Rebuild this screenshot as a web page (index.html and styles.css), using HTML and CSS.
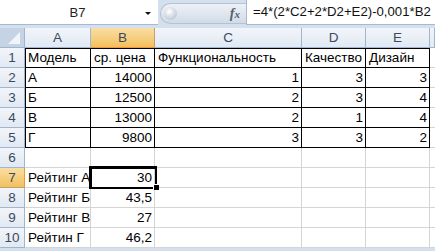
FILE: index.html
```html
<!DOCTYPE html>
<html lang="ru">

<head>
    <meta charset="utf-8">
    <title>Рейтинг моделей</title>
    <link rel="stylesheet" href="styles.css">
</head>

<body>
    <div class="formula-bar">
        <div class="name-box">
            <span class="name">B7</span>
            <span class="name-arrow"></span>
        </div>
        <div class="fx-box">
            <span class="knob"></span>
            <span class="fx">f<small>x</small></span>
        </div>
        <div class="formula">=4*(2*C2+2*D2+E2)-0,001*B2</div>
    </div>

    <div class="sheet">
        <div class="corner">
            <svg width="24" height="19" viewBox="0 0 24 19">
                <polygon points="20,4 20,16 8,16" fill="#ffffff" opacity="0.75" />
            </svg>
        </div>
        <div class="hd">A</div>
        <div class="hd hd-sel">B</div>
        <div class="hd">C</div>
        <div class="hd">D</div>
        <div class="hd">E</div>
        <div class="hd"></div>

        <div class="rh">1</div>
        <div class="c tb tb-left tb-top">Модель</div>
        <div class="c tb tb-top">ср. цена</div>
        <div class="c tb tb-top">Функциональность</div>
        <div class="c tb tb-top">Качество</div>
        <div class="c tb tb-top">Дизайн</div>
        <div class="c"></div>

        <div class="rh">2</div>
        <div class="c tb tb-left">А</div>
        <div class="c tb num">14000</div>
        <div class="c tb num">1</div>
        <div class="c tb num">3</div>
        <div class="c tb num">3</div>
        <div class="c"></div>

        <div class="rh">3</div>
        <div class="c tb tb-left">Б</div>
        <div class="c tb num">12500</div>
        <div class="c tb num">2</div>
        <div class="c tb num">3</div>
        <div class="c tb num">4</div>
        <div class="c"></div>

        <div class="rh">4</div>
        <div class="c tb tb-left">В</div>
        <div class="c tb num">13000</div>
        <div class="c tb num">2</div>
        <div class="c tb num">1</div>
        <div class="c tb num">4</div>
        <div class="c"></div>

        <div class="rh">5</div>
        <div class="c tb tb-left">Г</div>
        <div class="c tb num">9800</div>
        <div class="c tb num">3</div>
        <div class="c tb num">3</div>
        <div class="c tb num">2</div>
        <div class="c"></div>

        <div class="rh">6</div>
        <div class="c"></div>
        <div class="c"></div>
        <div class="c"></div>
        <div class="c"></div>
        <div class="c"></div>
        <div class="c"></div>

        <div class="rh rh-sel">7</div>
        <div class="c">Рейтинг А</div>
        <div class="c num selected">30</div>
        <div class="c"></div>
        <div class="c"></div>
        <div class="c"></div>
        <div class="c"></div>

        <div class="rh">8</div>
        <div class="c">Рейтинг Б</div>
        <div class="c num">43,5</div>
        <div class="c"></div>
        <div class="c"></div>
        <div class="c"></div>
        <div class="c"></div>

        <div class="rh">9</div>
        <div class="c">Рейтинг В</div>
        <div class="c num">27</div>
        <div class="c"></div>
        <div class="c"></div>
        <div class="c"></div>
        <div class="c"></div>

        <div class="rh">10</div>
        <div class="c">Рейтин Г</div>
        <div class="c num">46,2</div>
        <div class="c"></div>
        <div class="c"></div>
        <div class="c"></div>
        <div class="c"></div>
    </div>
</body>

</html>
```

FILE: styles.css
```css
:root {
    --color-text: #000000;
    --color-head-text: #3b4b5c;
    --color-grid: #d4d4d4;
    --color-head-line: #9eb6ce;
    --color-band: #d5e0ee;
    --color-white: #ffffff;
    --font-cell: 'Liberation Sans', Arial, sans-serif;
}

body {
    margin: 0;
    width: 435px;
    height: 251px;
    overflow: hidden;
    background: var(--color-band);
    font-family: var(--font-cell);
    font-size: 13.5px;
    color: var(--color-text);
}

/* formula bar */

.formula-bar {
    display: flex;
    height: 25px;
    margin-bottom: 3px;
}

.name-box {
    width: 158px;
    box-sizing: border-box;
    display: flex;
    align-items: center;
    background: var(--color-white);
    border-bottom: 1px solid #a5b9d1;
}

.name {
    flex: 1;
    text-align: center;
    padding-left: 10px;
    font-size: 13px;
    color: #222222;
}

.name-arrow {
    width: 0;
    height: 0;
    margin: 2px 7px 0 0;
    border-left: 3px solid transparent;
    border-right: 3px solid transparent;
    border-top: 3px solid #111111;
}

.fx-box {
    width: 85px;
    margin: 3px 0 1px 2px;
    display: flex;
    align-items: center;
    justify-content: space-between;
    background: linear-gradient(#eef2f7, #d2dbe6);
    border: 1px solid #b3c2d4;
    border-right: none;
    border-radius: 11px 0 0 11px;
}

.knob {
    width: 13px;
    height: 13px;
    margin-left: 3px;
    border-radius: 50%;
    background: radial-gradient(circle at 40% 35%, #ffffff, #c4ccd6 70%);
}

.fx {
    margin-right: 6px;
    font-family: 'Liberation Serif', serif;
    font-style: italic;
    font-weight: bold;
    font-size: 14px;
    color: #556070;
}

.fx small {
    font-size: 11px;
}

.formula {
    flex: 1;
    min-width: 0;
    box-sizing: border-box;
    padding: 4px 0 0 6px;
    background: var(--color-white);
    border-left: 1px solid #a5b9d1;
    border-bottom: 1px solid #a5b9d1;
    white-space: nowrap;
    overflow: hidden;
    font-size: 13.2px;
    color: #111111;
}

/* sheet grid */

.sheet {
    display: grid;
    grid-template-columns: 25px 66px 64px 147px 64px 64px minmax(0, 1fr);
    grid-auto-rows: 20px;
    background: var(--color-white);
    overflow: hidden;
}

.corner,
.hd,
.rh {
    box-sizing: border-box;
    border-right: 1px solid var(--color-head-line);
    border-bottom: 1px solid var(--color-head-line);
    background: linear-gradient(#f2f5fa, #e2e9f3);
    color: var(--color-head-text);
    display: flex;
    align-items: center;
    justify-content: center;
}

.corner {
    background: #c5d3e4;
    align-items: flex-start;
    justify-content: flex-start;
}

.hd-sel,
.rh-sel {
    background: linear-gradient(#fbdda4, #f1c15f);
    border-color: #f29536 #c2a06e #f29536 #c2a06e;
}

.hd-sel {
    border-bottom-color: #f29536;
}

.rh-sel {
    border-right-color: #f29536;
    border-bottom-color: #c2a06e;
}

.c {
    box-sizing: border-box;
    border-right: 1px solid var(--color-grid);
    border-bottom: 1px solid var(--color-grid);
    padding: 0 3px 2px;
    display: flex;
    align-items: flex-end;
    white-space: nowrap;
}

.num {
    justify-content: flex-end;
    padding-right: 2px;
}

.tb {
    border-right-color: #000000;
    border-bottom-color: #000000;
}

.tb-left {
    box-shadow: inset 1px 0 0 #000000;
}

.tb-top {
    box-shadow: inset 0 1px 0 #000000;
}

.tb-left.tb-top {
    box-shadow: inset 1px 1px 0 #000000;
}

.selected {
    position: relative;
}

.selected::after {
    content: '';
    position: absolute;
    top: -2px;
    left: -2px;
    right: -3px;
    bottom: -2px;
    border: 3px solid #000000;
    border-width: 3px 2px 2px 3px;
}

.selected::before {
    content: '';
    position: absolute;
    right: -5px;
    bottom: -3px;
    width: 5px;
    height: 5px;
    background: #000000;
    border: 1px solid #ffffff;
    border-right: none;
    border-bottom: none;
    z-index: 1;
}
```
